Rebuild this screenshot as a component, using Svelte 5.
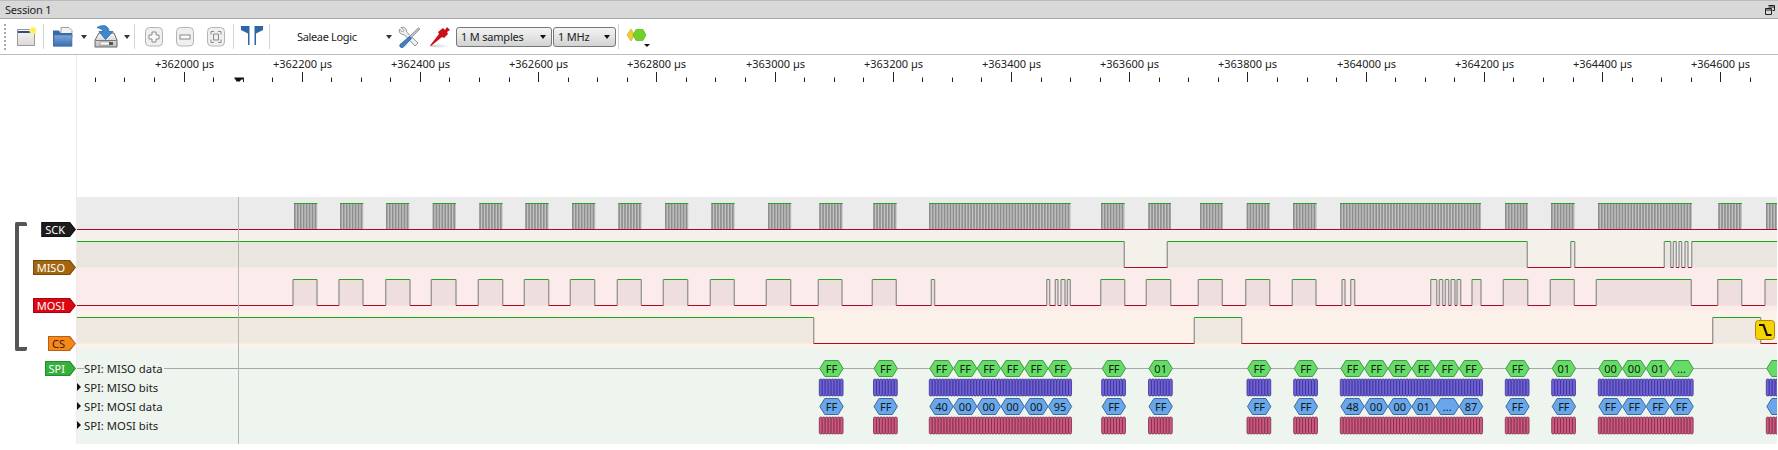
<script lang="ts">
  const END = 1777;
  const MAJOR_STEP = 118.22;
  const FIRST_MAJOR = 183.5;

  const majors = Array.from({ length: 14 }, (_, i) => ({
    x: Math.round(FIRST_MAJOR + i * MAJOR_STEP) + 0.5,
    label: `+${362000 + i * 200} µs`,
  }));
  const minors: number[] = [];
  for (let i = -3; i < 54; i++) {
    if (i % 4 === 0) continue;
    const x = FIRST_MAJOR + (i * MAJOR_STEP) / 4;
    if (x < END) minors.push(Math.round(x) + 0.5);
  }

  // clock bursts, page x
  const bursts: [number, number][] = [
    [294, 317.3], [340, 363.3], [386, 409.3], [432.7, 456], [479.3, 502.6], [525.3, 548.6],
    [572, 595.3], [618.3, 641.6], [665, 688.3], [711.3, 734.6], [768, 791.3], [819.3, 842.7],
    [873.3, 896.7], [929, 1070.7], [1101, 1124.7], [1148.3, 1171], [1200, 1223], [1246.7, 1270],
    [1293, 1316.7], [1340, 1481], [1505, 1528], [1551, 1574.7], [1598, 1692], [1718.3, 1742],
    [1766, END],
  ];
  const clockEdges = bursts.flatMap(([a, b]) => {
    const out: number[] = [];
    for (let x = a + 0.8; x < b; x += 2.95) out.push(x);
    return out;
  });

  const misoHigh: [number, number][] = [
    [77, 1124.3], [1167.3, 1527.3], [1570.7, 1574.7], [1664.3, 1670.7], [1673.3, 1676.3],
    [1679, 1681.7], [1685, 1688], [1691.7, END],
  ];
  const mosiHigh: [number, number][] = [
    [293, 317], [339, 363], [385.7, 410], [431.3, 456], [478.3, 502.7], [524.3, 548.7],
    [570.3, 594.7], [617.3, 641.3], [663.3, 687.7], [710.3, 734.3], [766.3, 790.7], [818.3, 842],
    [872.3, 896.3], [931.3, 934.6], [1046.7, 1049.7], [1055.3, 1058], [1061, 1065], [1067.3, 1070.3],
    [1100.7, 1124.7], [1146.3, 1170.7], [1198.3, 1222.3], [1245.7, 1269.7], [1292.3, 1316], [1342, 1345],
    [1350.7, 1354.7], [1430.7, 1436.7], [1439.3, 1442.7], [1445.3, 1448.7], [1451, 1455], [1457, 1460.7],
    [1472, 1481], [1503.3, 1527.7], [1550.3, 1574.3], [1596.3, 1691.3], [1717.7, 1741.7], [1765, END],
  ];
  const csHigh: [number, number][] = [[77, 813.7], [1194.3, 1241.7], [1712.7, 1760.7]];

  const channels = [
    { name: 'MISO', high: 241.5, low: 267.5, fill: '#e9e5df', spans: misoHigh },
    { name: 'MOSI', high: 279.5, low: 305.5, fill: '#eedede', spans: mosiHigh },
    { name: 'CS', high: 317.5, low: 343.5, fill: '#efe9e1', spans: csHigh },
  ];

  function lows(spans: [number, number][]): [number, number][] {
    const out: [number, number][] = [];
    let at = 77;
    for (const [a, b] of spans) {
      if (a > at) out.push([at, a]);
      at = b;
    }
    if (at < END) out.push([at, END]);
    return out;
  }

  const W = 23.7;
  const groups = [
    { x: 819.3, miso: ['FF'], mosi: ['FF'] },
    { x: 873.5, miso: ['FF'], mosi: ['FF'] },
    { x: 929.3, miso: ['FF', 'FF', 'FF', 'FF', 'FF', 'FF'], mosi: ['40', '00', '00', '00', '00', '95'] },
    { x: 1101.7, miso: ['FF'], mosi: ['FF'] },
    { x: 1148.5, miso: ['01'], mosi: ['FF'] },
    { x: 1247, miso: ['FF'], mosi: ['FF'] },
    { x: 1293.7, miso: ['FF'], mosi: ['FF'] },
    { x: 1340.3, miso: ['FF', 'FF', 'FF', 'FF', 'FF', 'FF'], mosi: ['48', '00', '00', '01', '...', '87'] },
    { x: 1505.3, miso: ['FF'], mosi: ['FF'] },
    { x: 1551.7, miso: ['01'], mosi: ['FF'] },
    { x: 1598.3, miso: ['00', '00', '01', '...'], mosi: ['FF', 'FF', 'FF', 'FF'] },
    { x: 1766.3, miso: [''], mosi: [''] },
  ];

  function hexPoints(x: number): string {
    const a = x + 0.5;
    const b = x + W + 0.2;
    return `${a},9.5 ${a + 5},1.5 ${b - 5},1.5 ${b},9.5 ${b - 5},17.5 ${a + 5},17.5`;
  }

  const bits = groups.flatMap((g) => {
    const n = g.miso.length * 8;
    return Array.from({ length: n }, (_, i) => g.x + (i * W) / 8);
  });

  const rows = [
    { label: 'SPI: MISO data', kind: 'hex', key: 'miso', fill: '#66dc66', line: '#3f9a45', first: true },
    { label: 'SPI: MISO bits', kind: 'bits', fill: '#6f62d6', line: '#3a2f90' },
    { label: 'SPI: MOSI data', kind: 'hex', key: 'mosi', fill: '#6aa6ec', line: '#3a6a9e' },
    { label: 'SPI: MOSI bits', kind: 'bits', fill: '#cc5a80', line: '#7d2a48' },
  ];

  const tags = [
    { name: 'SCK', cls: 'sck' },
    { name: 'MISO', cls: 'miso' },
    { name: 'MOSI', cls: 'mosi' },
    { name: 'CS', cls: 'cs' },
    { name: 'SPI', cls: 'spi' },
  ];
</script>

<div class="app">
  <div class="titlebar">
    <span>Session 1</span>
    <svg class="restore" viewBox="0 0 10 10" aria-hidden="true">
      <path d="M3.5.5h6v5h-2M.5 3.5h6v6h-6z M3.5 2h6M.5 5h6" fill="none" stroke="#222" />
    </svg>
  </div>

  <div class="toolbar">
    <svg class="grip" viewBox="0 0 2 26" aria-hidden="true">
      <path d="M1 0v26" stroke="#aaa" stroke-width="2" stroke-dasharray="2 2" />
    </svg>

    <svg class="ico new" viewBox="0 0 22 22" aria-hidden="true">
      <defs>
        <linearGradient id="win" x1="0" y1="0" x2="0" y2="1">
          <stop offset="0" stop-color="#f8f6ee" />
          <stop offset="1" stop-color="#d9d9d9" />
        </linearGradient>
        <radialGradient id="glow">
          <stop offset="0" stop-color="#ffe93a" />
          <stop offset="0.6" stop-color="#fff27a" />
          <stop offset="1" stop-color="#fff27a" stop-opacity="0" />
        </radialGradient>
      </defs>
      <rect x="1.5" y="3.5" width="17" height="16" fill="url(#win)" stroke="#9a9a9a" />
      <path d="M2 6h13" stroke="#2e4f86" stroke-width="2" />
      <circle cx="17" cy="4.5" r="4.5" fill="url(#glow)" />
    </svg>
    <i class="sep"></i>

    <svg class="ico folder" viewBox="0 0 22 22" aria-hidden="true">
      <defs>
        <linearGradient id="folder" x1="0" y1="0" x2="0" y2="1">
          <stop offset="0" stop-color="#7ea6d8" />
          <stop offset="1" stop-color="#3a6fb0" />
        </linearGradient>
      </defs>
      <path d="M9 1.5h8l3 3v7H9z" fill="#f2f2f2" stroke="#888" stroke-width=".8" />
      <path d="M1 4.5h6l1.5 2.5H20v13.5H1z" fill="#356aa8" />
      <rect x="2" y="9" width="18" height="11" fill="url(#folder)" stroke="#3f74b4" stroke-width=".6" />
    </svg>
    <i class="drop"></i>

    <svg class="ico save" viewBox="0 0 24 24" aria-hidden="true">
      <defs>
        <linearGradient id="tray" x1="0" y1="0" x2="0" y2="1">
          <stop offset="0" stop-color="#fafafa" />
          <stop offset="1" stop-color="#bdbdbd" />
        </linearGradient>
      </defs>
      <path d="M5 9h15l3 7v7H1v-7z" fill="url(#tray)" stroke="#666" />
      <path d="M1.5 16.500h21" stroke="#777" />
      <rect x="6" y="18" width="10" height="3" fill="#fff" stroke="#777" stroke-width=".6" />
      <rect x="15" y="18" width="4" height="3" fill="#555" />
      <path d="M3 3.500c6-3.500 12-2 12 4h4l-7.500 8L5 7.500h4c0-2-3-3-6-4z" fill="#3f87cc" stroke="#2c6aa8" stroke-width=".8" />
    </svg>
    <i class="drop"></i>
    <i class="sep"></i>

    <svg class="ico zoom-btn plus" viewBox="0 0 18 20" aria-hidden="true">
      <rect x=".5" y=".5" width="17" height="18.500" rx="4" fill="#efefef" stroke="#b4b4b4" />
      <path d="M7 5h4v3h3v4h-3v3H7v-3H4V8h3z" fill="#fafafa" stroke="#8a8a8a" />
    </svg>
    <svg class="ico zoom-btn minus" viewBox="0 0 18 20" aria-hidden="true">
      <rect x=".5" y=".5" width="17" height="18.500" rx="4" fill="#efefef" stroke="#b4b4b4" />
      <rect x="4" y="8" width="10" height="4" fill="#fafafa" stroke="#8a8a8a" />
    </svg>
    <svg class="ico zoom-btn fit" viewBox="0 0 18 20" aria-hidden="true">
      <rect x=".5" y=".5" width="17" height="18.500" rx="4" fill="#efefef" stroke="#b4b4b4" />
      <path d="M4 7.500V4.500h3M11 4.500h3v3M4 12.500v3h3M11 15.500h3v-3M6.500 7h5v6h-5z" fill="none" stroke="#8a8a8a" />
    </svg>
    <i class="sep"></i>

    <svg class="ico flags" viewBox="0 0 24 20" aria-hidden="true">
      <path d="M1 0h8.500v19H8V7.500L1 4z" fill="#2f64a8" />
      <path d="M23 0h-8.500v19H16V7.500L23 4z" fill="#2f64a8" />
    </svg>
    <i class="sep"></i>

    <div class="device">
      <span>Saleae Logic</span>
      <i class="drop"></i>
    </div>

    <svg class="ico tools" viewBox="0 0 22 22" aria-hidden="true">
      <path d="M3 1.500 6 4.500 4.500 6 1.500 3c-1 3 1 6 4.500 5.500L17 20l3-3L8.500 6C9 2.500 6 .5 3 1.500z" fill="#eeeeee" stroke="#7f8b96" stroke-width=".9" />
      <path d="M20.500 1.500 22 3 12 13l-1.500-1.500z" fill="#b8c0c8" stroke="#6e7a86" stroke-width=".6" />
      <path d="M11.500 10.500 13.500 12.500 5 21.500c-1.500 1-4-1-3-3z" fill="#3f80c2" stroke="#275a94" stroke-width=".8" />
    </svg>
    <svg class="ico probe" viewBox="0 0 20 22" aria-hidden="true">
      <defs>
        <linearGradient id="shadow" x1="0" y1="0" x2="1" y2="0">
          <stop offset="0" stop-color="#ccc" />
          <stop offset="1" stop-color="#ccc" stop-opacity="0" />
        </linearGradient>
      </defs>
      <ellipse cx="10" cy="20" rx="10" ry="1.500" fill="url(#shadow)" />
      <path d="M0 19.500 9 8l-1-2 5-4 2 2 2-3 3 3-3 2 1 2-4 4-2-1L1 20z" fill="#cc0f17" />
    </svg>

    <div class="combo samples"><span>1 M samples</span><i class="drop dark"></i></div>
    <div class="combo rate"><span>1 MHz</span><i class="drop dark"></i></div>
    <i class="sep"></i>

    <svg class="ico analyzer" viewBox="0 0 24 22" aria-hidden="true">
      <path d="M1 9 5 3l3.500 6L5 15z" fill="#f0cc2e" stroke="#c8a020" stroke-width=".6" />
      <path d="M7 9l3-5.500h7l3 5.500-3 5.500h-7z" fill="#6fd22a" stroke="#4ea91c" stroke-width=".6" />
      <path d="M18 18h6l-3 3z" fill="#111" />
    </svg>
  </div>

  <div class="ruler">
    <div class="ruler-gutter"></div>
    <svg class="ruler-svg" viewBox="77 55 1701 142" aria-hidden="false">
      {#each majors as m}
        <text x={m.x} y="68" text-anchor="middle">{m.label}</text>
        <path d="M{m.x} 72v10" />
      {/each}
      {#each minors as x}
        <path d="M{x} 77.500v4.500" />
      {/each}
      <path class="marker" d="M234 77.500h9v2h-1.500l-2.500 2.500-1-1-1 1-3-4.500z" />
    </svg>
  </div>

  <div class="main">
    <div class="gutter">
      <div class="bracket"></div>
      <div class="tags">
        {#each tags as t}
          <div class="tag {t.cls}"><span>{t.name}</span></div>
        {/each}
      </div>
    </div>

    <div class="track">
      <svg class="logic" viewBox="77 197 1700 151" aria-hidden="false">
        <rect x="77" y="197" width="1700" height="32" fill="#ebebeb" />
        <rect x="77" y="229" width="1700" height="5" fill="#f9eeee" />
        <rect x="77" y="234" width="1700" height="34" fill="#f4f0ea" />
        <rect x="77" y="268" width="1700" height="43" fill="#fcebeb" />
        <rect x="77" y="311" width="1700" height="37" fill="#fdf2ea" />

        {#each bursts as [a, b]}
          <rect x={a} y="203.500" width={b - a} height="26" fill="#c4c4c4" />
        {/each}
        {#each clockEdges as x}
          <path d="M{x} 204v25" stroke="#8e8e8e" stroke-width="1.600" />
        {/each}
        <path d="M77 229.500H{END}" stroke="#a80c20" />
        {#each bursts as [a, b]}
          <path d="M{a} 203.500H{b}" stroke="#1fa51f" />
        {/each}

        {#each channels as c}
          {#each c.spans as [a, b]}
            <rect x={a} y={c.high} width={b - a} height={c.low - c.high} fill={c.fill} />
            <path d="M{a} {c.high}H{b}" stroke="#1fa51f" />
            {#if a > 77}<path d="M{a} {c.high}V{c.low}" stroke="#999" stroke-width="1.400" />{/if}
            {#if b < END}<path d="M{b} {c.high}V{c.low}" stroke="#999" stroke-width="1.400" />{/if}
          {/each}
          {#each lows(c.spans) as [a, b]}
            <path d="M{a} {c.low}H{b}" stroke="#a80c20" />
          {/each}
        {/each}

        <rect x="1755.500" y="320.500" width="19" height="19" rx="3" fill="#f6d400" stroke="#a88c10" />
        <path d="M1759 325h4.500l3.500 10h4.500" fill="none" stroke="#111" stroke-width="2.200" />
      </svg>

      <div class="analyzers">
        {#each rows as row}
          <div class="row">
            <svg class="row-svg" viewBox="77 0 1700 19" aria-hidden="false">
              {#if row.first}<path d="M77 9.500H{END}" stroke="#a8a8a8" />{/if}
              {#if row.kind === 'hex'}
                {#each groups as g}
                  {#each g[row.key] as text, i}
                    <polygon points={hexPoints(g.x + i * W)} fill={row.fill} stroke={row.line} />
                    <text x={g.x + i * W + W / 2 + 0.3} y="13.500" text-anchor="middle">{text}</text>
                  {/each}
                {/each}
              {:else}
                {#each bits as x}
                  <rect {x} y="1" width="3" height="17" rx="1.500" fill={row.fill} stroke={row.line} stroke-width=".8" />
                {/each}
              {/if}
            </svg>
            <div class="row-label" class:first={row.first}>{row.label}</div>
          </div>
        {/each}
      </div>

      <div class="cursor"></div>
    </div>
  </div>
</div>

<style>
  :global(body) {
    background: #fff;
  }

  .app {
    width: 1778px;
    height: 450px;
    overflow: hidden;
    font-family: 'Noto Sans', sans-serif;
    font-size: 11px;
    color: #222;
    background: #fff;
  }

  .titlebar {
    height: 17px;
    display: flex;
    align-items: center;
    justify-content: space-between;
    padding: 0 3px 0 5px;
    background: #d8d8d8;
    border-top: 1px solid #bbb;
    border-bottom: 1px solid #a8a8a8;
    font-size: 11px;
    letter-spacing: -0.2px;
  }

  .restore {
    width: 10px;
    height: 10px;
  }

  .toolbar {
    height: 35px;
    display: flex;
    align-items: center;
    border-bottom: 1px solid #bdbdbd;
  }

  .grip {
    width: 2px;
    height: 26px;
    margin: 0 10px 0 4px;
  }

  .ico {
    flex: none;
    display: block;
  }

  .sep {
    flex: none;
    width: 1px;
    height: 25px;
    background: #d4d4d4;
  }

  .drop {
    flex: none;
    width: 0;
    height: 0;
    border-style: solid;
    border-width: 4px 3.500px 0;
    border-color: #333 transparent transparent;
  }

  .new {
    width: 22px;
    height: 22px;
    margin-right: 5px;
  }

  .folder {
    width: 22px;
    height: 22px;
    margin: 0 7px 0 8px;
  }

  .save {
    width: 24px;
    height: 24px;
    margin: 0 6px 0 7px;
    margin-top: -2px;
  }

  .save + .drop {
    margin-right: 4px;
  }

  .zoom-btn {
    width: 18px;
    height: 20px;
  }

  .plus {
    margin-left: 10px;
  }

  .minus,
  .fit {
    margin-left: 13px;
  }

  .fit {
    margin-right: 8px;
  }

  .flags {
    width: 24px;
    height: 20px;
    margin: -2px 5px 0 6px;
  }

  .device {
    flex: none;
    width: 127px;
    display: flex;
    align-items: center;
    justify-content: space-between;
    padding-left: 27px;
    padding-right: 5px;
    box-sizing: border-box;
    font-size: 11px;
    letter-spacing: -0.35px;
  }

  .tools {
    width: 22px;
    height: 22px;
    margin-left: 1px;
  }

  .probe {
    width: 20px;
    height: 22px;
    margin: 0 6px 0 10px;
  }

  .combo {
    flex: none;
    height: 20px;
    box-sizing: border-box;
    display: flex;
    align-items: center;
    justify-content: space-between;
    padding: 0 5px 0 4px;
    border: 1px solid #777;
    border-radius: 3px;
    background: linear-gradient(#f4f4f4, #e4e4e4 50%, #d2d2d2);
    font-size: 11px;
    letter-spacing: -0.2px;
  }

  .samples {
    width: 96px;
  }

  .rate {
    width: 63px;
    margin: 0 2px 0 1px;
  }

  .dark {
    border-top-color: #111;
  }

  .analyzer {
    width: 24px;
    height: 22px;
    margin-left: 7px;
  }

  .ruler {
    height: 142px;
    display: flex;
  }

  .ruler-gutter {
    flex: none;
    width: 76px;
    border-right: 1px solid #ececec;
  }

  .ruler-svg {
    width: 1701px;
    height: 142px;
    display: block;
  }

  .ruler-svg text {
    font-size: 11px;
    fill: #222;
  }

  .ruler-svg path {
    stroke: #222;
    fill: none;
  }

  .ruler-svg path.marker {
    stroke: none;
    fill: #111;
  }

  .main {
    display: flex;
    height: 247px;
  }

  .gutter {
    flex: none;
    width: 76px;
    display: flex;
    justify-content: space-between;
    border-right: 1px solid #ececec;
    padding-top: 25px;
    box-sizing: content-box;
  }

  .bracket {
    flex: none;
    width: 8px;
    height: 121px;
    margin: 0 0 0 15px;
    border: 4px solid #555;
    border-right: none;
    border-radius: 2px;
  }

  .tags {
    display: flex;
    flex-direction: column;
    align-items: flex-end;
    gap: 23px;
  }

  .tag {
    height: 15px;
    padding: 1px;
    box-sizing: border-box;
    clip-path: polygon(0 0, calc(100% - 6px) 0, 100% 50%, calc(100% - 6px) 100%, 0 100%);
    background: var(--edge);
    color: #fff;
    line-height: 13px;
    font-size: 11px;
  }

  .tag span {
    display: block;
    height: 13px;
    padding: 0 10px 0 3px;
    clip-path: polygon(0 0, calc(100% - 6px) 0, 100% 50%, calc(100% - 6px) 100%, 0 100%);
    background: var(--face);
  }

  .sck {
    --edge: #111;
    --face: #1c1c1c;
  }

  .miso {
    --edge: #7c4a08;
    --face: #a3660f;
  }

  .mosi {
    --edge: #a80410;
    --face: #dc0712;
  }

  .cs {
    --edge: #b8600c;
    --face: #f5871c;
    color: #3a2000;
  }

  .spi {
    --edge: #1f8f2a;
    --face: #36b03c;
    margin-top: -13px;
  }

  .track {
    position: relative;
    width: 1700px;
    flex: none;
  }

  .logic {
    width: 1700px;
    height: 151px;
    display: block;
  }

  .analyzers {
    height: 96px;
    box-sizing: border-box;
    padding-top: 11px;
    background: #eef5ee;
  }

  .row {
    position: relative;
    height: 19px;
  }

  .row-svg {
    width: 1700px;
    height: 19px;
    display: block;
  }

  .row-svg text {
    font-size: 11px;
    fill: #0c1c10;
  }

  .row-label {
    position: absolute;
    top: 1px;
    left: 7px;
    padding-right: 1px;
    height: 17px;
    line-height: 17px;
    background: #eef5ee;
    font-size: 11.300px;
    white-space: nowrap;
  }

  .row-label:not(.first)::before {
    content: '';
    position: absolute;
    left: -7px;
    top: 4px;
    border-style: solid;
    border-width: 4px 0 4px 4px;
    border-color: transparent transparent transparent #111;
  }

  .cursor {
    position: absolute;
    top: 0;
    bottom: 0;
    left: 161px;
    width: 1px;
    background: #b4b4b4;
  }
</style>
